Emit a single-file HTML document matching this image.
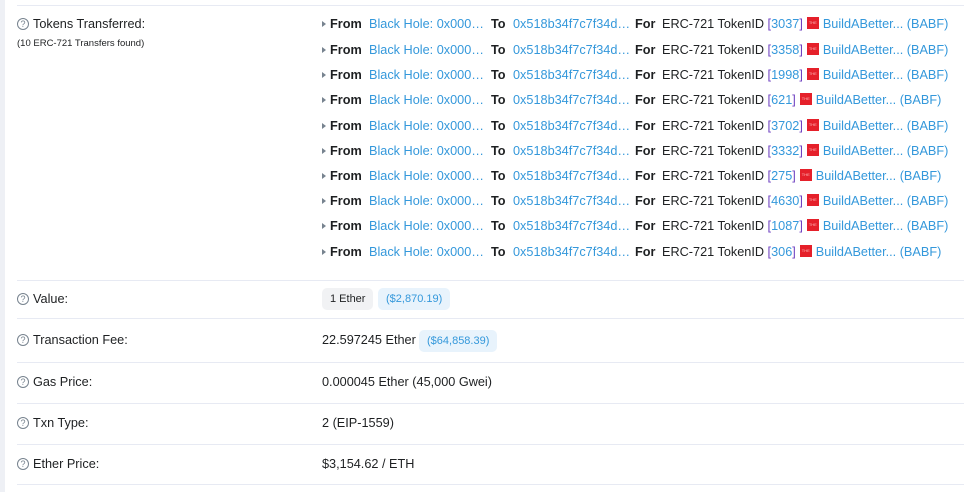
<!DOCTYPE html>
<html><head><meta charset="utf-8"><style>
body{margin:0;width:964px;height:492px;background:#fff;font-family:"Liberation Sans",Arial,sans-serif;font-size:12.7px;color:#1e2022;position:relative;overflow:hidden}
.strip{position:absolute;left:0;top:0;width:5px;height:492px;background:#eef0f5}
.hr{position:absolute;left:17px;right:0;height:1px;background:#e7eaf3}
.a{position:absolute;white-space:nowrap;line-height:16px}
.q{display:inline-block;box-sizing:border-box;width:12px;height:12px;border:1px solid #77838f;border-radius:50%;font-size:9px;line-height:10px;text-align:center;color:#77838f;margin-right:4px;vertical-align:1px}
.lbl{left:17px}
.b{font-weight:bold}
.l{color:#3498db}
.p{color:#6f42c1}
.ic{display:inline-block;width:12px;height:12px;background:#e5202a;vertical-align:-1px;margin:0 4px 0 4px;font-size:4px;color:#fbb;text-align:center;line-height:12px;overflow:hidden}
.tri{position:absolute;left:322px;width:0;height:0;border-left:4px solid #77838f;border-top:3px solid transparent;border-bottom:3px solid transparent}
.badge{position:absolute;padding:0 8px;height:22px;line-height:22px;border-radius:5px;font-size:11px}
</style></head><body>
<div class="strip"></div>
<div class="hr" style="top:5px"></div>
<div class="a lbl" style="top:16px"><span class="q">?</span>Tokens Transferred:</div>
<div class="a" style="left:17px;top:36px;font-size:9.5px">(10 ERC-721 Transfers found)</div>

<div id="rows"></div>
<script>
var ids=["3037","3358","1998","621","3702","3332","275","4630","1087","306"];
var tops=[24,50,75,100,126,151,176,201,226,252];
var h="";
for(var i=0;i<10;i++){var t=tops[i]-8;
h+='<div class="tri" style="top:'+(t+5)+'px"></div>'+
'<div class="a b" style="left:330px;top:'+t+'px">From</div>'+
'<div class="a l" style="left:369px;top:'+t+'px">Black Hole: 0x000…</div>'+
'<div class="a b" style="left:491px;top:'+t+'px">To</div>'+
'<div class="a l" style="left:513px;top:'+t+'px">0x518b34f7c7f34d…</div>'+
'<div class="a b" style="left:635px;top:'+t+'px">For</div>'+
'<div class="a" style="left:662px;top:'+t+'px">ERC-721 TokenID <span class="p">[</span><span class="l">'+ids[i]+'</span><span class="p">]</span><span class="ic">THE</span><span class="l">BuildABetter... (BABF)</span></div>';}
document.getElementById("rows").innerHTML=h;
</script>

<div class="hr" style="top:280px"></div>
<div class="a lbl" style="top:291px"><span class="q">?</span>Value:</div>
<div class="badge" style="left:322px;top:288px;background:#f1f2f4;color:#1e2022">1 Ether</div>
<div class="badge" style="left:378px;top:288px;background:#e8f3fc;color:#3498db">($2,870.19)</div>

<div class="hr" style="top:318px"></div>
<div class="a lbl" style="top:332px"><span class="q">?</span>Transaction Fee:</div>
<div class="a" style="left:322px;top:332px">22.597245 Ether</div>
<div class="badge" style="left:419px;top:330px;background:#e8f3fc;color:#3498db">($64,858.39)</div>

<div class="hr" style="top:362px"></div>
<div class="a lbl" style="top:374px"><span class="q">?</span>Gas Price:</div>
<div class="a" style="left:322px;top:374px">0.000045 Ether (45,000 Gwei)</div>

<div class="hr" style="top:403px"></div>
<div class="a lbl" style="top:415px"><span class="q">?</span>Txn Type:</div>
<div class="a" style="left:322px;top:415px">2 (EIP-1559)</div>

<div class="hr" style="top:444px"></div>
<div class="a lbl" style="top:456px"><span class="q">?</span>Ether Price:</div>
<div class="a" style="left:322px;top:456px">$3,154.62 / ETH</div>
<div class="hr" style="top:484px"></div>
</body></html>
